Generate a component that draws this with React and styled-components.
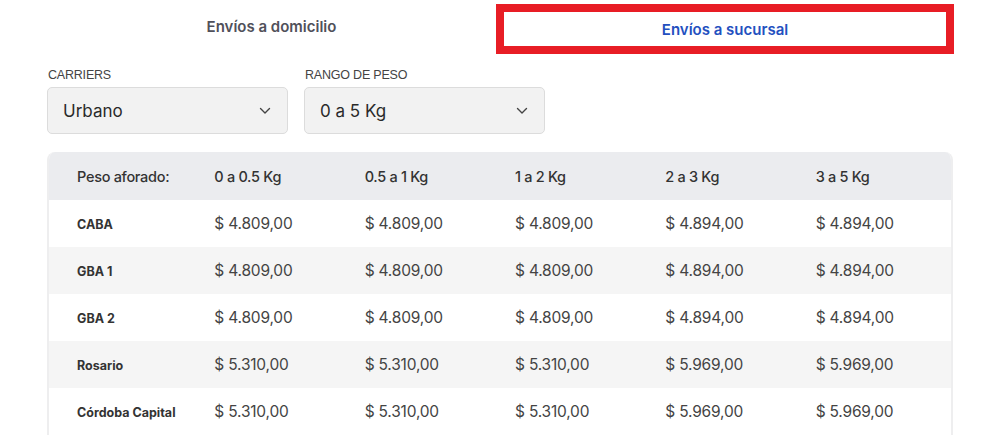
import React from "react";
import styled, { createGlobalStyle } from "styled-components";

const Global = createGlobalStyle`
  body {
    margin: 0;
    background: #fff;
    font-family: Inter, "Noto Sans", Arial, sans-serif;
  }
`;

const Page = styled.div`
  width: 906px;
  padding: 4px 0 0 47px;
`;

const Tabs = styled.div`
  display: grid;
  grid-template-columns: 449px 458px;
  height: 50px;
`;

const Tab = styled.button`
  box-sizing: border-box;
  height: 50px;
  border: ${(p) => (p.active ? "8px solid #e81d25" : "none")};
  background: #fff;
  font-family: inherit;
  font-size: 15px;
  font-weight: 600;
  color: ${(p) => (p.active ? "#2350bf" : "#50505a")};
  padding: 0;
  padding-bottom: ${(p) => (p.active ? "0" : "6px")};
  cursor: pointer;
`;

const Filters = styled.div`
  display: flex;
  gap: 16px;
  margin-top: 12px;
`;

const Field = styled.div`
  display: flex;
  flex-direction: column;
  gap: 3px;
`;

const Label = styled.span`
  font-family: "Liberation Sans", Arial, sans-serif;
  font-size: 12.5px;
  line-height: 18px;
  color: #444;
  padding-left: 1px;
  letter-spacing: -0.2px;
`;

const Select = styled.div`
  box-sizing: border-box;
  width: 241px;
  height: 47px;
  display: flex;
  align-items: center;
  justify-content: space-between;
  padding: 0 16px 0 15px;
  background: #f2f2f2;
  border: 1px solid #dcdcdc;
  border-radius: 5px;
  font-size: 17px;
  color: #2a2a2a;
`;

const TableBox = styled.div`
  box-sizing: border-box;
  width: 906px;
  margin-top: 18px;
  border-left: 2px solid #eeeeef;
  border-right: 2px solid #eeeeef;
  border-radius: 8px 8px 0 0;
  overflow: hidden;
`;

const Table = styled.table`
  width: 100%;
  border-collapse: collapse;
  table-layout: fixed;
`;

const HeadRow = styled.tr`
  background: #ebecef;
  height: 48px;
`;

const Th = styled.th`
  text-align: left;
  font-size: 14.5px;
  font-weight: 500;
  color: #333;
  padding: 0 0 0 ${(p) => (p.first ? "28px" : "15px")};
  letter-spacing: -0.3px;
`;

const Row = styled.tr`
  height: 47px;
  background: ${(p) => (p.shade ? "#f5f5f5" : "#fff")};
`;

const Name = styled.td`
  padding-left: 28px;
  padding-top: 2px;
  font-size: 12.5px;
  font-weight: 700;
  color: #333;
`;

const Price = styled.td`
  padding-left: 15px;
  font-size: 15.5px;
  color: #444;
  letter-spacing: -0.2px;
`;

const Chevron = () => (
  <svg width="12" height="8" viewBox="0 0 12 8" fill="none">
    <path d="M1.5 1.5 6 6l4.5-4.5" stroke="#444" strokeWidth="1.4" strokeLinecap="round" strokeLinejoin="round" />
  </svg>
);

const cols = ["0 a 0.5 Kg", "0.5 a 1 Kg", "1 a 2 Kg", "2 a 3 Kg", "3 a 5 Kg"];

const rows = [
  ["CABA", ["4.809,00", "4.809,00", "4.809,00", "4.894,00", "4.894,00"]],
  ["GBA 1", ["4.809,00", "4.809,00", "4.809,00", "4.894,00", "4.894,00"]],
  ["GBA 2", ["4.809,00", "4.809,00", "4.809,00", "4.894,00", "4.894,00"]],
  ["Rosario", ["5.310,00", "5.310,00", "5.310,00", "5.969,00", "5.969,00"]],
  ["Córdoba Capital", ["5.310,00", "5.310,00", "5.310,00", "5.969,00", "5.969,00"]],
];

export default function App() {
  return (
    <Page>
      <Global />
      <Tabs>
        <Tab>Envíos a domicilio</Tab>
        <Tab active>Envíos a sucursal</Tab>
      </Tabs>
      <Filters>
        <Field>
          <Label>CARRIERS</Label>
          <Select>
            Urbano
            <Chevron />
          </Select>
        </Field>
        <Field>
          <Label>RANGO DE PESO</Label>
          <Select>
            0 a 5 Kg
            <Chevron />
          </Select>
        </Field>
      </Filters>
      <TableBox>
        <Table>
          <thead>
            <HeadRow>
              <Th first>Peso aforado:</Th>
              {cols.map((c) => (
                <Th key={c}>{c}</Th>
              ))}
            </HeadRow>
          </thead>
          <tbody>
            {rows.map(([name, prices], i) => (
              <Row key={name} shade={i % 2 === 1}>
                <Name>{name}</Name>
                {prices.map((p, j) => (
                  <Price key={j}>$ {p}</Price>
                ))}
              </Row>
            ))}
          </tbody>
        </Table>
      </TableBox>
    </Page>
  );
}
